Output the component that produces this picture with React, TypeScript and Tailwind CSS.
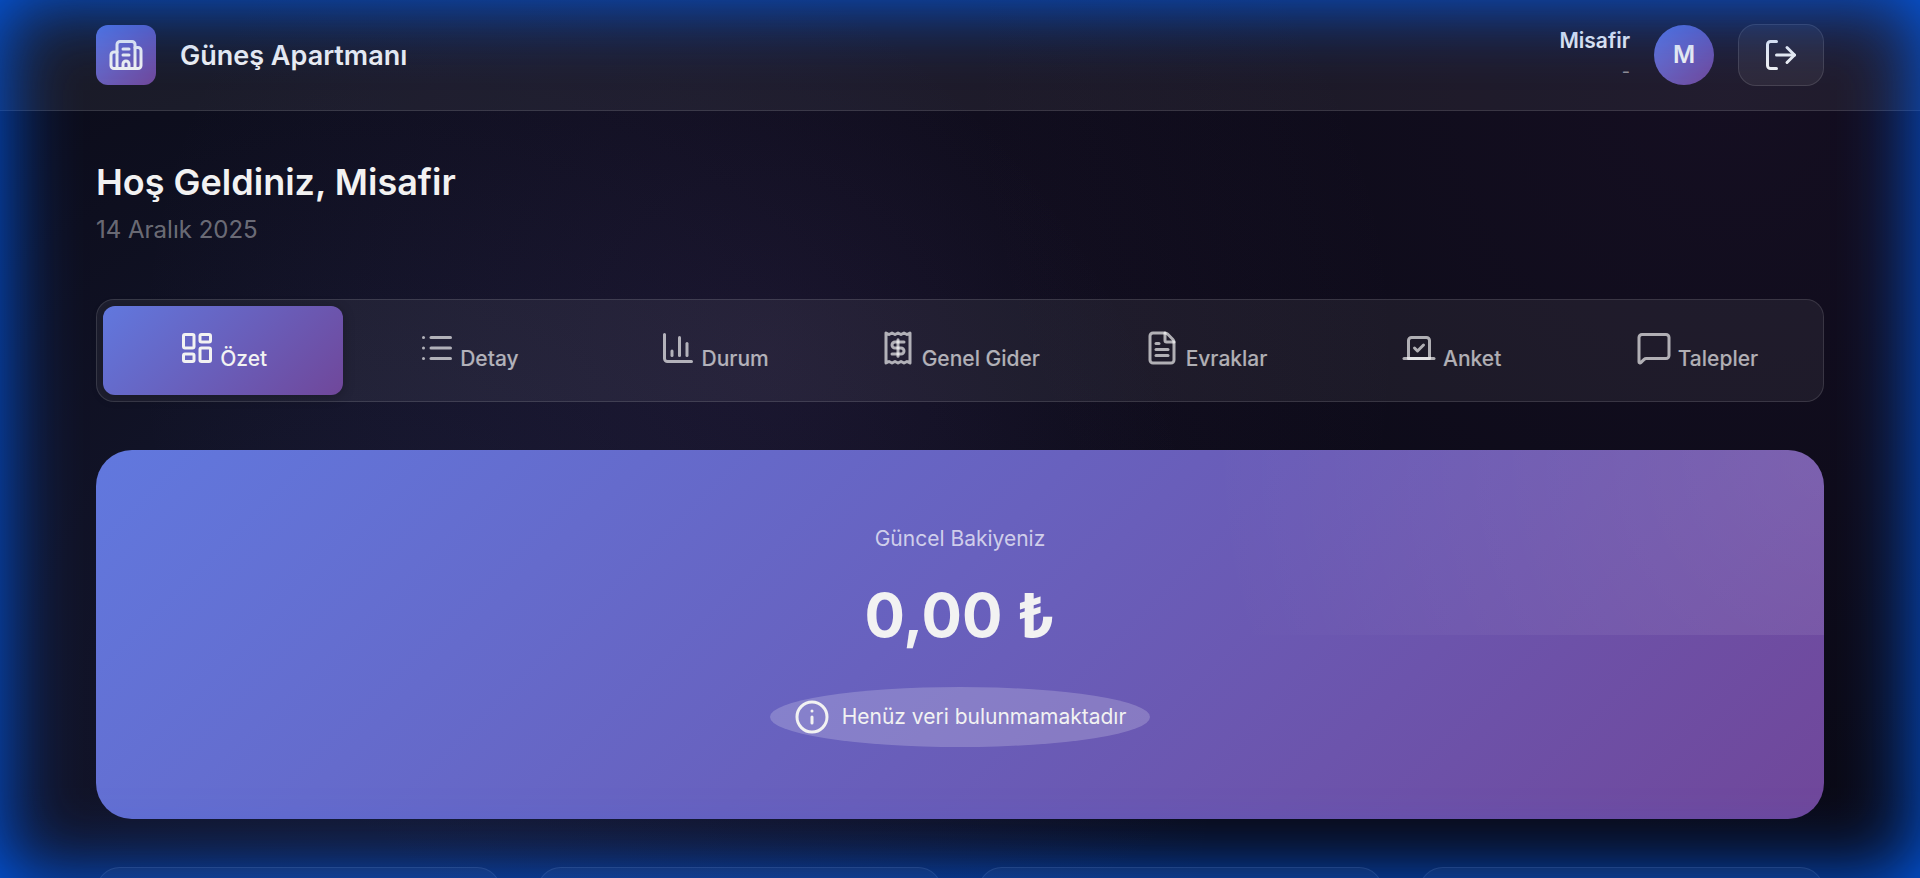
import {
  Building2,
  ChartColumn,
  FileText,
  Info,
  LayoutDashboard,
  List,
  LogOut,
  MessageSquare,
  Receipt,
  Vote,
  type LucideIcon,
} from "lucide-react";
import { useState } from "react";

const tabs: { label: string; icon: LucideIcon }[] = [
  { label: "Özet", icon: LayoutDashboard },
  { label: "Detay", icon: List },
  { label: "Durum", icon: ChartColumn },
  { label: "Genel Gider", icon: Receipt },
  { label: "Evraklar", icon: FileText },
  { label: "Anket", icon: Vote },
  { label: "Talepler", icon: MessageSquare },
];

const gradient = "bg-[linear-gradient(135deg,#6178de_0%,#70479a_100%)]";

function Header() {
  return (
    <header className="flex items-center justify-between border-b border-white/12 bg-white/6 px-24 py-6">
      <div className="flex items-center gap-6">
        <div className={`flex size-[60px] items-center justify-center rounded-xl ${gradient}`}>
          <Building2 size={36} />
        </div>
        <span className="text-[27px] leading-[43px] font-semibold">Güneş Apartmanı</span>
      </div>
      <div className="flex items-center gap-6">
        <div className="text-right">
          <div className="text-[21px] leading-[34px] font-semibold">Misafir</div>
          <div className="text-lg leading-7 text-white/50">-</div>
        </div>
        <div className={`flex size-[60px] items-center justify-center rounded-full text-2xl font-semibold ${gradient}`}>
          M
        </div>
        <button
          type="button"
          aria-label="Çıkış"
          className="rounded-[18px] border border-white/12 bg-white/6 px-6 py-3"
        >
          <LogOut size={36} />
        </button>
      </div>
    </header>
  );
}

function Tabs() {
  const [active, setActive] = useState("Özet");
  return (
    <nav className="mt-12 grid grid-cols-7 gap-1.5 rounded-[18px] border border-white/12 bg-white/6 p-1.5">
      {tabs.map(({ label, icon: Icon }) => (
        <button
          key={label}
          type="button"
          onClick={() => setActive(label)}
          className={`rounded-xl py-6 text-center text-[21px] leading-[25px] font-medium whitespace-nowrap ${
            active === label
              ? `shadow-[0_2px_12px_rgba(0,0,0,0.25)] ${gradient}`
              : "text-white/65"
          }`}
        >
          <Icon size={36} className="inline align-baseline" /> {label}
        </button>
      ))}
    </nav>
  );
}

function Balance() {
  return (
    <section
      className={`relative mt-12 flex flex-col items-center overflow-hidden rounded-[36px] p-[72px] ${gradient}`}
    >
      <div className="absolute -top-1/2 -right-1/2 h-full w-full bg-[radial-gradient(circle,rgba(255,255,255,0.1)_0%,transparent_70%)]" />
      <p className="text-[21px] leading-[33px] text-white/70">Güncel Bakiyeniz</p>
      <p className="mt-3 text-[60px] leading-[96px] font-bold">0,00 ₺</p>
      <div className="mt-6 flex items-center gap-3 rounded-[50%] bg-white/20 px-6 py-3 text-[21px] leading-9">
        <Info size={36} />
        <span>Henüz veri bulunmamaktadır</span>
      </div>
    </section>
  );
}

export default function App() {
  return (
    <div className="h-screen overflow-y-auto bg-[#0a0a16] bg-[radial-gradient(circle_at_20%_80%,rgba(102,126,234,0.13)_0%,transparent_50%),radial-gradient(circle_at_90%_10%,rgba(130,60,150,0.09)_0%,transparent_40%),radial-gradient(circle_at_40%_40%,rgba(130,75,170,0.1)_0%,transparent_50%)] font-['Inter',sans-serif] text-[#f2f2f2] [scrollbar-width:none]">
      <Header />
      <main className="px-24 py-12">
        <h1 className="text-4xl leading-[47px] font-semibold">Hoş Geldiniz, Misafir</h1>
        <p className="mt-1 mb-[50px] text-2xl leading-[39px] text-white/40">14 Aralık 2025</p>
        <Tabs />
        <Balance />
        <div className="mt-12 grid grid-cols-4 gap-9">
          {[0, 1, 2, 3].map((card) => (
            <div key={card} className="h-48 rounded-3xl border border-white/12 bg-white/6" />
          ))}
        </div>
      </main>
      <div className="pointer-events-none fixed inset-0 shadow-[inset_0_0_76px_rgb(0,92,240)]" />
    </div>
  );
}
